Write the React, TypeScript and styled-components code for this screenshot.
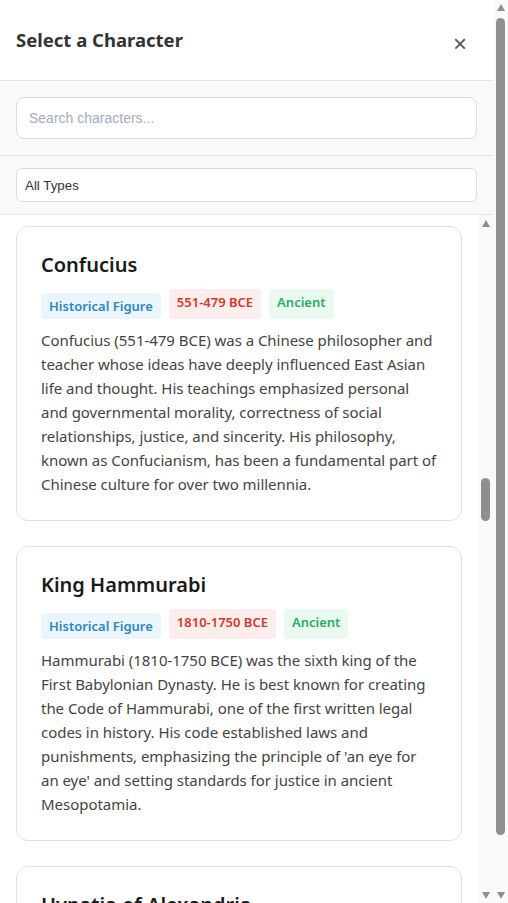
import { useLayoutEffect, useRef } from 'react';
import styled, { createGlobalStyle } from 'styled-components';

type Era = 'Ancient' | 'Medieval' | 'Renaissance' | 'Modern';

interface Character {
  name: string;
  dates: string;
  era: Era;
  description: string;
}

const characters: Character[] = [
  { name: 'Socrates', dates: '470-399 BCE', era: 'Ancient', description: 'Socrates was a Greek philosopher from Athens, credited as a founder of Western philosophy. He taught by asking questions and left no writings of his own.' },
  { name: 'Plato', dates: '428-348 BCE', era: 'Ancient', description: 'Plato was a student of Socrates and the founder of the Academy in Athens. His dialogues shaped Western thought on justice, beauty and the ideal state.' },
  { name: 'Aristotle', dates: '384-322 BCE', era: 'Ancient', description: 'Aristotle studied under Plato and tutored Alexander the Great. He wrote on logic, biology, ethics, politics and poetry, laying the ground for many sciences.' },
  { name: 'Alexander the Great', dates: '356-323 BCE', era: 'Ancient', description: 'King of Macedon who built one of the largest empires of the ancient world, stretching from Greece to northwestern India before his early death.' },
  { name: 'Julius Caesar', dates: '100-44 BCE', era: 'Ancient', description: 'Roman general and statesman who conquered Gaul and rose to become dictator of Rome. His assassination helped bring about the end of the Republic.' },
  { name: 'Cleopatra VII', dates: '69-30 BCE', era: 'Ancient', description: 'The last active ruler of the Ptolemaic Kingdom of Egypt, known for her intelligence, political skill and alliances with Julius Caesar and Mark Antony.' },
  { name: 'Archimedes', dates: '287-212 BCE', era: 'Ancient', description: 'Greek mathematician and inventor from Syracuse. He worked out the principle of buoyancy and approximated pi with remarkable accuracy.' },
  { name: 'Pythagoras', dates: '570-495 BCE', era: 'Ancient', description: 'Greek philosopher and mathematician who founded a school in Croton. The famous theorem on right triangles bears his name.' },
  { name: 'Ramesses II', dates: '1303-1213 BCE', era: 'Ancient', description: 'Often called the greatest pharaoh of Egypt, he led military campaigns into the Levant and built monuments such as Abu Simbel.' },
  { name: 'Nefertiti', dates: '1370-1330 BCE', era: 'Ancient', description: 'Queen of Egypt and wife of Akhenaten. She played a central role in the religious changes of her time and is known for her famous bust.' },
  { name: 'Sun Tzu', dates: '544-496 BCE', era: 'Ancient', description: 'Chinese general and strategist traditionally credited with writing The Art of War, a treatise that is still studied by leaders today.' },
  { name: 'Siddhartha Gautama', dates: '563-483 BCE', era: 'Ancient', description: 'A spiritual teacher from ancient India who became known as the Buddha. His teachings on suffering and the path to liberation founded Buddhism.' },
  { name: 'Hannibal Barca', dates: '247-183 BCE', era: 'Ancient', description: 'Carthaginian general who crossed the Alps with war elephants during the Second Punic War and won major victories against Rome.' },
  { name: 'Ashoka the Great', dates: '304-232 BCE', era: 'Ancient', description: 'Emperor of the Maurya Dynasty who ruled most of the Indian subcontinent. After the Kalinga war he embraced Buddhism and non-violence.' },
  { name: 'Leonidas I', dates: '540-480 BCE', era: 'Ancient', description: 'King of Sparta who led a small Greek force against the Persian army at the Battle of Thermopylae, where he fell in battle.' },
  { name: 'Qin Shi Huang', dates: '259-210 BCE', era: 'Ancient', description: 'The first emperor of a unified China. He standardised weights, money and writing, and was buried with the famous Terracotta Army.' },
  { name: 'Cyrus the Great', dates: '600-530 BCE', era: 'Ancient', description: 'Founder of the Achaemenid Persian Empire, remembered for his tolerance toward the customs and religions of the peoples he conquered.' },
  { name: 'Homer', dates: '8th c. BCE', era: 'Ancient', description: 'The legendary Greek poet to whom the Iliad and the Odyssey are attributed, two epics that stand at the start of Western literature.' },
  { name: 'Confucius', dates: '551-479 BCE', era: 'Ancient', description: 'Confucius (551-479 BCE) was a Chinese philosopher and teacher whose ideas have deeply influenced East Asian life and thought. His teachings emphasized personal and governmental morality, correctness of social relationships, justice, and sincerity. His philosophy, known as Confucianism, has been a fundamental part of Chinese culture for over two millennia.' },
  { name: 'King Hammurabi', dates: '1810-1750 BCE', era: 'Ancient', description: "Hammurabi (1810-1750 BCE) was the sixth king of the First Babylonian Dynasty. He is best known for creating the Code of Hammurabi, one of the first written legal codes in history. His code established laws and punishments, emphasizing the principle of 'an eye for an eye' and setting standards for justice in ancient Mesopotamia." },
  { name: 'Hypatia of Alexandria', dates: '350-415 CE', era: 'Ancient', description: 'Hypatia was a Neoplatonist philosopher, astronomer and mathematician who taught in Alexandria. She was one of the most renowned scholars of her age.' },
  { name: 'Marcus Aurelius', dates: '121-180 CE', era: 'Ancient', description: 'Roman emperor and Stoic philosopher whose private notes, known as the Meditations, remain a widely read work on duty and self-discipline.' },
  { name: 'Charlemagne', dates: '742-814 CE', era: 'Medieval', description: 'King of the Franks who united much of western Europe and was crowned Emperor of the Romans, reviving learning and culture in his realm.' },
  { name: 'Genghis Khan', dates: '1162-1227 CE', era: 'Medieval', description: 'Founder of the Mongol Empire, which became the largest contiguous empire in history after his death.' },
  { name: 'Marco Polo', dates: '1254-1324 CE', era: 'Medieval', description: 'Venetian merchant whose account of his travels through Asia and the court of Kublai Khan introduced Europeans to Central Asia and China.' },
  { name: 'Mansa Musa', dates: '1280-1337 CE', era: 'Medieval', description: 'Ruler of the Mali Empire, famed for his enormous wealth and his pilgrimage to Mecca, which made Timbuktu a centre of learning.' },
  { name: 'Ibn Battuta', dates: '1304-1369 CE', era: 'Medieval', description: 'Moroccan scholar and explorer who travelled across Africa, the Middle East, India and China over nearly thirty years.' },
  { name: 'Joan of Arc', dates: '1412-1431 CE', era: 'Medieval', description: 'French peasant girl who led the French army to victory at Orleans during the Hundred Years War and was later made a saint.' },
  { name: 'Leonardo da Vinci', dates: '1452-1519 CE', era: 'Renaissance', description: 'Italian painter, engineer and scientist, creator of the Mona Lisa and The Last Supper, whose notebooks are full of inventions.' },
  { name: 'Michelangelo', dates: '1475-1564 CE', era: 'Renaissance', description: 'Italian sculptor, painter and architect who carved the David and painted the ceiling of the Sistine Chapel.' },
  { name: 'Elizabeth I', dates: '1533-1603 CE', era: 'Renaissance', description: 'Queen of England whose long reign saw the defeat of the Spanish Armada and a flowering of English drama and poetry.' },
  { name: 'William Shakespeare', dates: '1564-1616 CE', era: 'Renaissance', description: 'English playwright and poet, author of Hamlet, Macbeth and Romeo and Juliet, widely regarded as the greatest writer in English.' },
  { name: 'Galileo Galilei', dates: '1564-1642 CE', era: 'Renaissance', description: 'Italian astronomer who improved the telescope, observed the moons of Jupiter and supported the idea that the Earth orbits the Sun.' },
  { name: 'Isaac Newton', dates: '1643-1727 CE', era: 'Modern', description: 'English mathematician and physicist who formulated the laws of motion and universal gravitation and helped develop calculus.' },
  { name: 'Wolfgang Amadeus Mozart', dates: '1756-1791 CE', era: 'Modern', description: 'Austrian composer who wrote more than six hundred works, including symphonies, operas and concertos, in his short life.' },
  { name: 'Napoleon Bonaparte', dates: '1769-1821 CE', era: 'Modern', description: 'French military leader who crowned himself emperor and conquered much of Europe before his final defeat at Waterloo.' },
  { name: 'Abraham Lincoln', dates: '1809-1865 CE', era: 'Modern', description: 'Sixteenth president of the United States, who led the country through the Civil War and worked to abolish slavery.' },
  { name: 'Charles Darwin', dates: '1809-1882 CE', era: 'Modern', description: 'English naturalist whose theory of evolution by natural selection changed how we understand the history of life.' },
  { name: 'Ada Lovelace', dates: '1815-1852 CE', era: 'Modern', description: 'English mathematician who wrote what is considered the first computer program, for Charles Babbage\u2019s Analytical Engine.' },
  { name: 'Florence Nightingale', dates: '1820-1910 CE', era: 'Modern', description: 'British nurse who reformed hospital care during the Crimean War and founded the first secular school of nursing.' },
  { name: 'Harriet Tubman', dates: '1822-1913 CE', era: 'Modern', description: 'American abolitionist who escaped slavery and guided dozens of others to freedom along the Underground Railroad.' },
  { name: 'Nikola Tesla', dates: '1856-1943 CE', era: 'Modern', description: 'Serbian-American inventor known for his work on alternating current, induction motors and wireless transmission.' },
  { name: 'Marie Curie', dates: '1867-1934 CE', era: 'Modern', description: 'Polish-French physicist and chemist who pioneered research on radioactivity and won Nobel Prizes in two sciences.' },
  { name: 'Mahatma Gandhi', dates: '1869-1948 CE', era: 'Modern', description: 'Leader of the Indian independence movement who used non-violent resistance to challenge British rule.' },
  { name: 'Albert Einstein', dates: '1879-1955 CE', era: 'Modern', description: 'German-born physicist who developed the theory of relativity, one of the two pillars of modern physics.' },
  { name: 'Frida Kahlo', dates: '1907-1954 CE', era: 'Modern', description: 'Mexican painter known for her vivid self-portraits and works inspired by the nature and culture of Mexico.' },
  { name: 'Nelson Mandela', dates: '1918-2013 CE', era: 'Modern', description: 'South African anti-apartheid leader who spent 27 years in prison and became the first Black president of his country.' },
  { name: 'Martin Luther King Jr.', dates: '1929-1968 CE', era: 'Modern', description: 'American minister and civil rights leader who championed equality through peaceful protest and powerful speeches.' },
];

const eraColors: Record<Era, { bg: string; fg: string }> = {
  Ancient: { bg: '#eafaf1', fg: '#27ae60' },
  Medieval: { bg: '#f4ecf7', fg: '#8e44ad' },
  Renaissance: { bg: '#fdf2e9', fg: '#d35400' },
  Modern: { bg: '#e8f6f3', fg: '#16a085' },
};

const GlobalStyle = createGlobalStyle`
  * {
    box-sizing: border-box;
  }
  body {
    margin: 0;
    font-family: "Segoe UI", "Noto Sans", sans-serif;
    background: #ffffff;
  }
`;

const App = () => {
  const listRef = useRef<HTMLDivElement>(null);
  const focusRef = useRef<HTMLDivElement>(null);

  useLayoutEffect(() => {
    if (listRef.current && focusRef.current) {
      listRef.current.scrollTop = focusRef.current.offsetTop - 11;
    }
  }, []);

  return (
    <Page>
      <GlobalStyle />
      <Modal>
        <Header>
          <Title>Select a Character</Title>
          <CloseButton aria-label="Close">×</CloseButton>
        </Header>
        <SearchBar>
          <SearchInput placeholder="Search characters..." />
        </SearchBar>
        <FilterBar>
          <TypeSelect defaultValue="all">
            <option value="all">All Types</option>
            <option value="historical">Historical Figure</option>
          </TypeSelect>
        </FilterBar>
        <ListArea>
          <CharacterList ref={listRef}>
            {characters.map((c) => (
              <Card key={c.name} ref={c.name === 'Confucius' ? focusRef : undefined}>
                <CardTitle>{c.name}</CardTitle>
                <TagRow>
                  <TypeTag>Historical Figure</TypeTag>
                  <Tag $bg="#fdedec" $fg="#d0392b">{c.dates}</Tag>
                  <Tag $bg={eraColors[c.era].bg} $fg={eraColors[c.era].fg}>{c.era}</Tag>
                </TagRow>
                <Description>{c.description}</Description>
              </Card>
            ))}
          </CharacterList>
          <ScrollRail $padTop={5}>
            <RailArrow />
            <RailThumb $top={251} $length={43} />
            <RailSpacer />
            <RailArrow $down />
          </ScrollRail>
        </ListArea>
      </Modal>
      <ScrollRail $padTop={4}>
        <RailArrow />
        <RailThumb $top={7} $length={817} />
        <RailSpacer />
        <RailArrow $down />
      </ScrollRail>
    </Page>
  );
};

const Page = styled.div`
  display: flex;
  height: 100vh;
  overflow: hidden;
`;

const Modal = styled.div`
  flex: 1;
  min-width: 0;
  display: flex;
  flex-direction: column;
  background-color: #ffffff;
`;

const Header = styled.div`
  height: 81px;
  flex-shrink: 0;
  display: flex;
  align-items: center;
  justify-content: space-between;
  padding: 0 16px;
  border-bottom: 1px solid #e2e4e7;
`;

const Title = styled.h2`
  margin: 0 0 1px;
  font-size: 18.5px;
  font-weight: 700;
  color: #333333;
`;

const CloseButton = styled.button`
  border: none;
  outline: none;
  background-color: inherit;
  cursor: pointer;
  padding: 0 10px 0 4px;
  margin-top: 8px;
  font-family: "Liberation Sans", sans-serif;
  font-size: 24px;
  line-height: 1;
  color: #555555;
`;

const SearchBar = styled.div`
  flex-shrink: 0;
  padding: 16px;
  background-color: #f8f9fa;
  border-bottom: 1px solid #e2e4e7;
`;

const SearchInput = styled.input`
  display: block;
  width: 100%;
  height: 42px;
  padding: 0 12px;
  border: 1px solid #dddddd;
  border-radius: 8px;
  font-family: "Liberation Sans", Arial, sans-serif;
  font-size: 14px;
  color: #333333;
  outline: none;
  &::placeholder {
    color: #9fadbd;
  }
`;

const FilterBar = styled.div`
  flex-shrink: 0;
  padding: 12px 16px;
  background-color: #f8f9fa;
  border-bottom: 1px solid #e2e4e7;
`;

const TypeSelect = styled.select`
  display: block;
  width: 100%;
  height: 34px;
  padding: 0 8px;
  appearance: none;
  border: 1px solid #dddddd;
  border-radius: 6px;
  background-color: #ffffff;
  font-family: "Liberation Sans", Arial, sans-serif;
  font-size: 13.33px;
  color: #333333;
  outline: none;
`;

const ListArea = styled.div`
  flex: 1;
  min-height: 0;
  display: flex;
`;

const CharacterList = styled.div`
  position: relative;
  flex: 1;
  min-width: 0;
  overflow-y: auto;
  padding: 16px;
  background-color: #ffffff;
`;

const ScrollRail = styled.div<{ $padTop: number }>`
  width: 15px;
  flex-shrink: 0;
  display: flex;
  flex-direction: column;
  align-items: center;
  padding: ${(p) => p.$padTop}px 0 4px;
  background-color: #fafafa;
`;

const RailArrow = styled.span<{ $down?: boolean }>`
  width: 0;
  height: 0;
  border-left: 4.5px solid transparent;
  border-right: 4.5px solid transparent;
  ${(p) => (p.$down ? 'border-top: 7px solid #8f8f8f;' : 'border-bottom: 7px solid #8f8f8f;')}
`;

const RailThumb = styled.span<{ $top: number; $length: number }>`
  width: 9px;
  height: ${(p) => p.$length}px;
  margin-top: ${(p) => p.$top}px;
  border-radius: 5px;
  background-color: #8f8f8f;
`;

const RailSpacer = styled.span`
  flex: 1;
`;

const Card = styled.div`
  margin-bottom: 25px;
  padding: 24px;
  border: 1px solid #e0e0e0;
  border-radius: 12px;
  background-color: #ffffff;
`;

const CardTitle = styled.h3`
  margin: 0;
  font-size: 20px;
  line-height: 27px;
  font-weight: 600;
  color: #1a1a1a;
`;

const TagRow = styled.div`
  display: flex;
  align-items: flex-end;
  gap: 8px;
  margin: 11px 0 9px;
`;

const TypeTag = styled.span`
  padding: 4px 8px;
  border-radius: 4px;
  font-size: 13px;
  line-height: 18px;
  font-weight: 600;
  color: #2e86c1;
  background-color: #ebf5fb;
`;

const Tag = styled.span<{ $bg: string; $fg: string }>`
  padding: 4px 8px 8px;
  border-radius: 4px;
  font-size: 13px;
  line-height: 18px;
  font-weight: 600;
  color: ${(p) => p.$fg};
  background-color: ${(p) => p.$bg};
`;

const Description = styled.p`
  margin: 0;
  font-size: 15px;
  line-height: 24px;
  letter-spacing: -0.035px;
  color: #444444;
`;

export default App;
